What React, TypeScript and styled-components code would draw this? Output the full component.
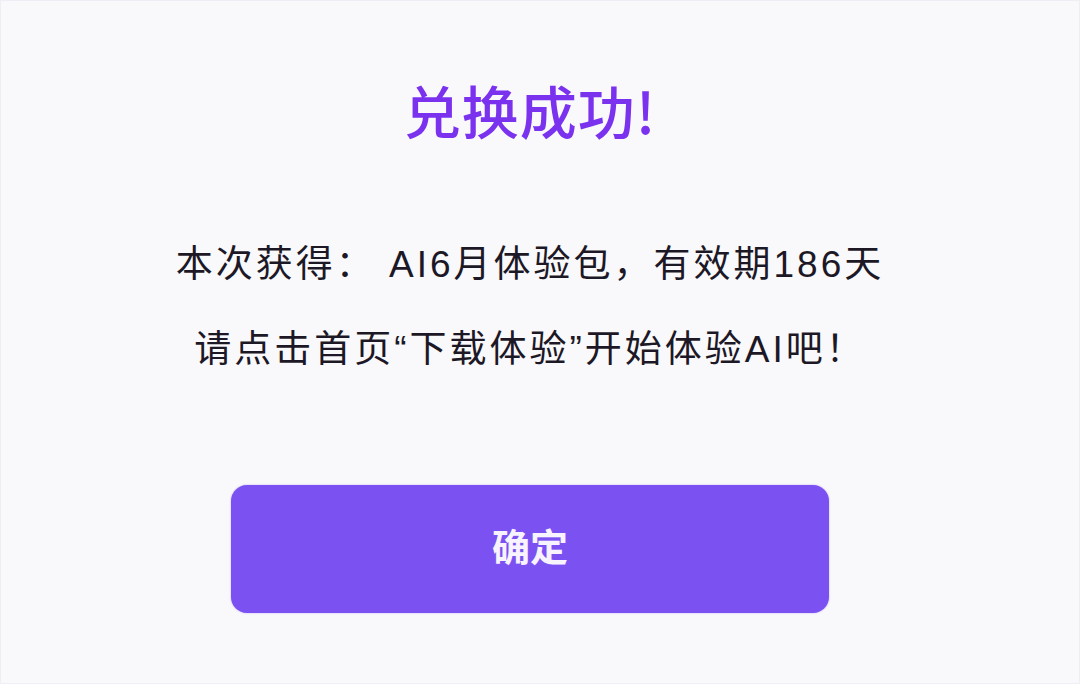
import styled, { createGlobalStyle } from 'styled-components';

const GlobalStyle = createGlobalStyle`
  html, body {
    margin: 0;
    padding: 0;
    background: #f9f9fc;
  }

  #root {
    min-height: 100vh;
  }
`;

const StyledPage = styled.div`
  box-sizing: border-box;
  width: 1080px;
  height: 684px;
  padding: 79px 20px 0 0;
  border: 1px solid #eeeff4;
  background: #f9f9fc;
  display: flex;
  flex-direction: column;
  align-items: center;
  font-family: 'Liberation Sans', 'Noto Sans CJK SC', sans-serif;
`;

const Title = styled.h1`
  margin: 0;
  font-family: 'Noto Sans CJK SC', sans-serif;
  font-size: 57px;
  line-height: 58px;
  font-weight: 500;
  letter-spacing: 1px;
  color: #7a32ef;
`;

const Message = styled.div`
  margin-top: 84px;
  display: flex;
  flex-direction: column;
  align-items: center;
`;

const Line = styled.p`
  margin: 0;
  font-size: 37px;
  line-height: 85px;
  letter-spacing: 3px;
  color: #1d1826;
  white-space: pre;
`;

const ConfirmButton = styled.button`
  margin-top: 93px;
  width: 598px;
  height: 128px;
  padding: 0 0 10px;
  border: none;
  border-radius: 16px;
  background: #7c51f1;
  box-shadow: 0 0 2px rgba(124, 81, 241, 0.45);
  color: #f7f3ff;
  font-family: 'Noto Sans CJK SC', sans-serif;
  font-size: 38px;
  font-weight: 700;
  cursor: pointer;
`;

const App = () => {
  return (
    <>
      <GlobalStyle />
      <StyledPage>
        <Title>兑换成功!</Title>
        <Message>
          <Line>本次获得： AI6月体验包，有效期186天</Line>
          <Line>请点击首页“下载体验”开始体验AI吧！</Line>
        </Message>
        <ConfirmButton>确定</ConfirmButton>
      </StyledPage>
    </>
  );
};

export default App;
